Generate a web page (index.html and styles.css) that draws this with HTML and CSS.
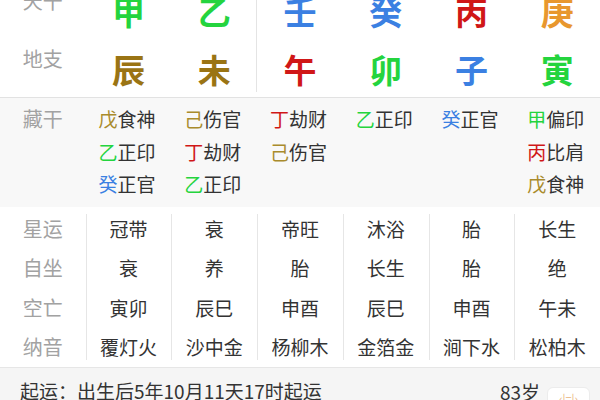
FILE: index.html
```html
<!DOCTYPE html>
<html lang="zh">
<head>
<meta charset="utf-8">
<link rel="stylesheet" href="styles.css">
</head>
<body>
<div class="page">
  <section class="pillars">
    <div class="col">
      <div class="pcell lab">天干</div>
      <div class="pcell lab">地支</div>
    </div>
    <div class="col">
      <div class="pcell big c-wood">甲</div>
      <div class="pcell big c-earth">辰</div>
    </div>
    <div class="col split">
      <div class="pcell big c-wood">乙</div>
      <div class="pcell big c-earth">未</div>
    </div>
    <div class="col">
      <div class="pcell big c-water">壬</div>
      <div class="pcell big c-fire">午</div>
    </div>
    <div class="col">
      <div class="pcell big c-water">癸</div>
      <div class="pcell big c-wood">卯</div>
    </div>
    <div class="col">
      <div class="pcell big c-fire">丙</div>
      <div class="pcell big c-water">子</div>
    </div>
    <div class="col">
      <div class="pcell big c-metal">庚</div>
      <div class="pcell big c-wood">寅</div>
    </div>
  </section>

  <section class="hidden">
    <div class="col"><div class="hs lab">藏干</div></div>
    <div class="col">
      <div class="hs"><span class="c-earth2">戊</span>食神</div>
      <div class="hs"><span class="c-wood">乙</span>正印</div>
      <div class="hs"><span class="c-water">癸</span>正官</div>
    </div>
    <div class="col">
      <div class="hs"><span class="c-earth2">己</span>伤官</div>
      <div class="hs"><span class="c-fire">丁</span>劫财</div>
      <div class="hs"><span class="c-wood">乙</span>正印</div>
    </div>
    <div class="col">
      <div class="hs"><span class="c-fire">丁</span>劫财</div>
      <div class="hs"><span class="c-earth2">己</span>伤官</div>
    </div>
    <div class="col">
      <div class="hs"><span class="c-wood">乙</span>正印</div>
    </div>
    <div class="col">
      <div class="hs"><span class="c-water">癸</span>正官</div>
    </div>
    <div class="col">
      <div class="hs"><span class="c-wood">甲</span>偏印</div>
      <div class="hs"><span class="c-fire">丙</span>比肩</div>
      <div class="hs"><span class="c-earth2">戊</span>食神</div>
    </div>
  </section>

  <section class="stats">
    <div class="col">
      <div class="st lab">星运</div>
      <div class="st lab">自坐</div>
      <div class="st lab">空亡</div>
      <div class="st lab">纳音</div>
    </div>
    <div class="col line">
      <div class="st">冠带</div>
      <div class="st">衰</div>
      <div class="st">寅卯</div>
      <div class="st">覆灯火</div>
    </div>
    <div class="col line">
      <div class="st">衰</div>
      <div class="st">养</div>
      <div class="st">辰巳</div>
      <div class="st">沙中金</div>
    </div>
    <div class="col line">
      <div class="st">帝旺</div>
      <div class="st">胎</div>
      <div class="st">申酉</div>
      <div class="st">杨柳木</div>
    </div>
    <div class="col line">
      <div class="st">沐浴</div>
      <div class="st">长生</div>
      <div class="st">辰巳</div>
      <div class="st">金箔金</div>
    </div>
    <div class="col line">
      <div class="st">胎</div>
      <div class="st">胎</div>
      <div class="st">申酉</div>
      <div class="st">涧下水</div>
    </div>
    <div class="col line">
      <div class="st">长生</div>
      <div class="st">绝</div>
      <div class="st">午未</div>
      <div class="st">松柏木</div>
    </div>
  </section>

  <section class="footer">
    <div class="qiyun">起运：出生后5年10月11天17时起运</div>
    <div class="age">83岁</div>
    <div class="swap">‹|=|›</div>
  </section>
</div>
</body>
</html>
```

FILE: styles.css
```css
html, body {
  margin: 0;
  padding: 0;
  background: #ffffff;
}
body {
  font-family: "Noto Sans CJK SC", "Noto Sans", sans-serif;
  color: #333333;
  overflow: hidden;
}
.page {
  width: 600px;
  height: 400px;
  overflow: hidden;
}
section {
  display: flex;
}
.col {
  flex: 1 1 0;
  min-width: 0;
  display: flex;
  flex-direction: column;
}
.lab {
  color: #a2a2a2;
  font-size: 20px;
}

/* pillars */
.pillars {
  margin-top: -19px;
  height: 116px;
}
.pillars .split {
  background: linear-gradient(#e4e4e4, #e4e4e4) right top / 1px calc(100% - 5px) no-repeat;
}
.pcell {
  height: 58px;
  display: flex;
  justify-content: center;
  align-items: center;
}
.pcell.lab {
  align-items: flex-start;
  padding-top: 10px;
  height: 48px;
  line-height: 20px;
}
.big {
  font-size: 33px;
  font-weight: 700;
  line-height: 1;
  padding-top: 2px;
  height: 56px;
}

/* hidden stems */
.hidden {
  background: #f8f8f8;
  border-top: 1px solid #e2e2e2;
  padding: 5px 0 6px;
}
.hs {
  font-size: 19px;
  line-height: 32.5px;
  height: 32.5px;
  text-align: center;
  padding-right: 3px;
  white-space: nowrap;
}
.hs.lab {
  font-size: 20px;
  padding-right: 0;
}

/* stats */
.stats {
  padding-top: 2px;
}
.stats .line {
  background: linear-gradient(#e6e6e6, #e6e6e6) left 5px / 1px calc(100% - 12px) no-repeat;
}
.st {
  height: 39.67px;
  line-height: 39.67px;
  text-align: center;
  font-size: 19px;
  white-space: nowrap;
}
.st.lab {
  font-size: 20px;
}

/* footer */
.footer {
  background: #f5f5f5;
  border-top: 1px solid #e6e6e6;
  height: 40px;
  align-items: flex-start;
  padding-left: 20px;
}
.qiyun {
  font-size: 19px;
  line-height: 22px;
  margin-top: 12px;
  color: #333;
  flex: 1 1 auto;
}
.age {
  font-size: 19px;
  line-height: 22px;
  margin-top: 13px;
  color: #333;
}
.swap {
  margin: 19px 10px 0 7px;
  width: 43px;
  height: 30px;
  box-sizing: border-box;
  border: 1px solid #ececec;
  border-radius: 6px;
  background: #ffffff;
  color: #e9b27a;
  font-size: 11px;
  text-align: center;
  line-height: 20px;
}

/* element colours */
.c-wood { color: #24d43e; }
.c-earth { color: #9a7414; }
.c-earth2 { color: #a98b2c; }
.c-fire { color: #d01717; }
.c-water { color: #3b80e2; }
.c-metal { color: #e8972e; }
```
